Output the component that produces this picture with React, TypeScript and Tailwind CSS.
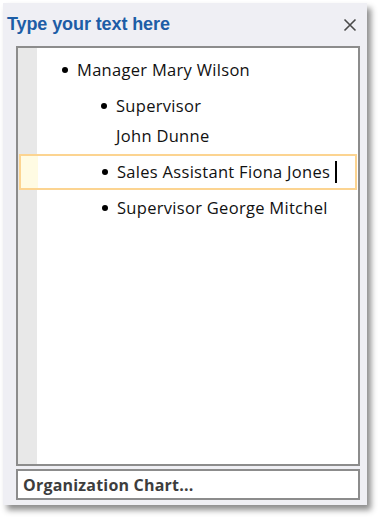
const font = { fontFamily: '"Open Sans", "Noto Sans", sans-serif' };

function Dot() {
  return (
    <span className="w-[15px] flex items-center">
      <span className="block w-[6px] h-[6px] rounded-full bg-black" />
    </span>
  );
}

export default function App() {
  return (
    <div className="w-[380px] h-[522px] bg-white pl-[3px] pt-[3px]">
      <div className="w-[364px] h-[502px] bg-[#efeff4] shadow-[4px_5px_6px_rgba(0,0,0,0.45)] flex flex-col pl-[13px] pr-[7px]">
        <div className="flex items-center justify-between h-[43px] -ml-[9px]">
          <span className="text-[18px] font-bold text-[#1d5da6] font-['Liberation_Sans',sans-serif] tracking-[-0.1px]">
            Type your text here
          </span>
          <svg width="14" height="14" viewBox="0 0 14 14" className="mr-[3px] mt-[1px]">
            <path d="M1.5 1.5 L12.5 12.5 M12.5 1.5 L1.5 12.5" stroke="#4a4a4a" strokeWidth="1.6" />
          </svg>
        </div>
        <div className="h-[420px] border-2 border-[#8c8c8c] bg-white flex text-[#111] text-[16.5px] tracking-[0.3px]" style={font}>
          <div className="flex-1 flex flex-col pt-[2px] pl-[1px] pr-[1px] bg-[linear-gradient(to_right,#e8e8e8_0,#e8e8e8_19px,white_19px)]">
            <div className="flex items-center h-[40px] pl-[43px]">
              <Dot />
              <span>Manager Mary Wilson</span>
            </div>
            <div className="flex items-center h-[32px] pl-[82px]">
              <Dot />
              <span>Supervisor</span>
            </div>
            <div className="flex items-center h-[32px] pl-[97px] pb-[4px]">
              <span>John Dunne</span>
            </div>
            <div className="flex items-center h-[36px] pl-[81px] border-2 border-[#fcd491] bg-[linear-gradient(to_right,#fffbe3_0,#fffbe3_17px,white_17px)]">
              <Dot />
              <span>Sales Assistant Fiona Jones</span>
              <span className="ml-[5px] w-[2px] h-[22px] bg-black" />
            </div>
            <div className="flex items-center h-[36px] pl-[83px]">
              <Dot />
              <span>Supervisor George Mitchel</span>
            </div>
            <div className="flex-1" />
          </div>
        </div>
        <div className="mt-[3px] h-[31px] border-2 border-[#8c8c8c] bg-white flex items-center pl-[5px]">
          <span className="text-[16px] font-bold text-[#3d3d3d] tracking-[0.2px]" style={font}>
            Organization Chart...
          </span>
        </div>
      </div>
    </div>
  );
}
